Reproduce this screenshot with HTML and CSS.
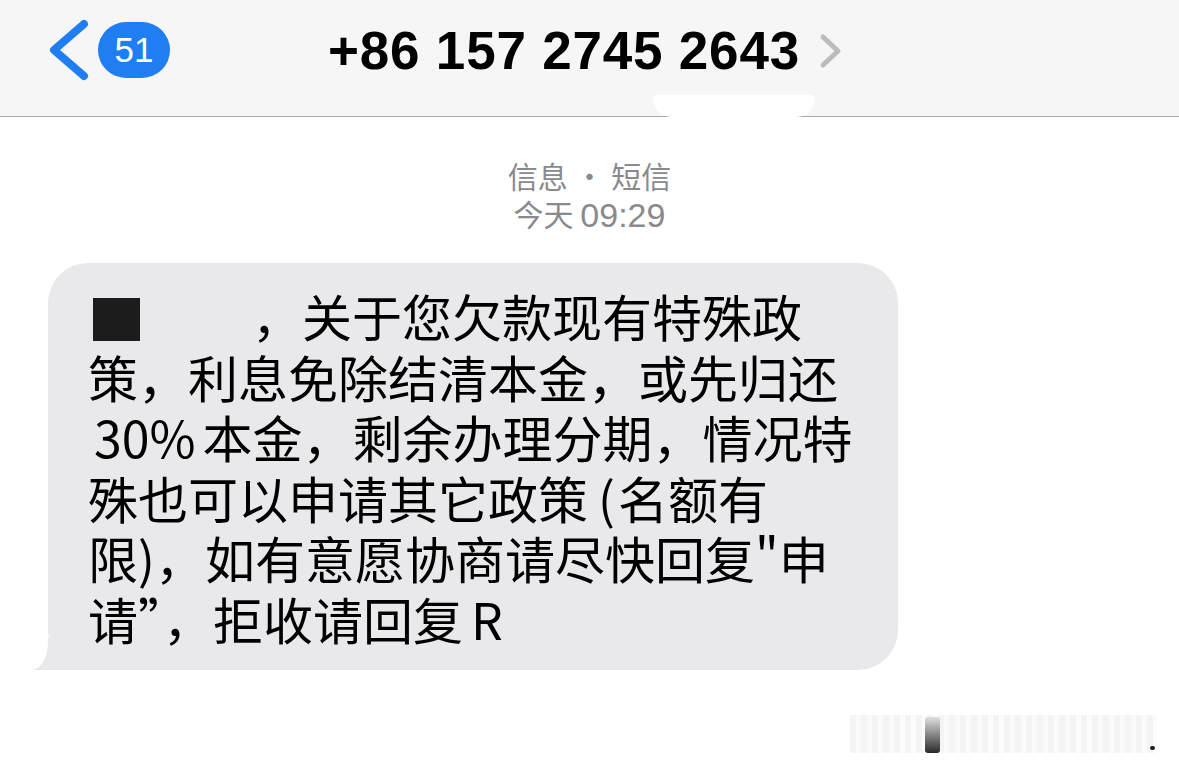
FILE: index.html
```html
<!DOCTYPE html>
<html lang="zh-CN">
<head>
    <meta charset="UTF-8">
    <title>+86 157 2745 2643</title>
    <link rel="stylesheet" href="styles.css">
</head>
<body>
    <div class="nav">
        <div class="nav-left">
            <svg class="back-icon" width="40" height="62" viewBox="0 0 40 62">
                <polyline points="35,5 5,31 35,57" fill="none" stroke="#1f7ef1" stroke-width="8" stroke-linecap="round" stroke-linejoin="round"/>
            </svg>
            <span class="badge">51</span>
        </div>
        <div class="nav-title">
            <span class="number">+86 157 2745 2643</span>
            <svg class="more-icon" width="24" height="36" viewBox="0 0 24 36">
                <polyline points="4,4 19,18 4,32" fill="none" stroke="#bcbcbc" stroke-width="5" stroke-linecap="round" stroke-linejoin="round"/>
            </svg>
        </div>
        <div></div>
        <div class="patch"></div>
    </div>

    <div class="thread">
        <div class="meta">
            <div>信息 · 短信</div>
            <div>今天 <span class="time">09:29</span></div>
        </div>

        <div class="bubble">
            <span class="redact"></span><span class="hidden-name"></span>，关于您欠款现有特殊政<br>
            策，利息免除结清本金，或先归还<br>
            <span class="num">30%</span>本金，剩余办理分期，情况特<br>
            殊也可以申请其它政策<span class="paren">(</span>名额有<br>
            限)，如有意愿协商请尽快回复"申<br>
            请”，拒收请回复<span class="letter">R</span>
        </div>
    </div>

    <div class="footer">
        <div class="watermark">
            <span class="mark-bar"></span>
            <span class="mark-dot"></span>
        </div>
    </div>
</body>
</html>
```

FILE: styles.css
```css
body {
    margin: 0;
    background: #fff;
    font-family: "Noto Sans CJK SC", "Noto Sans", sans-serif;
    color: #000;
}
.nav {
    position: relative;
    display: grid;
    grid-template-columns: 1fr auto 1fr;
    align-items: center;
    height: 100px;
    padding-bottom: 16px;
    background: #f6f6f6;
    border-bottom: 1px solid #a9a9a9;
}
.nav-left {
    display: flex;
    align-items: center;
    gap: 9px;
    padding-left: 49px;
}
.back-icon {
    display: block;
}
.badge {
    display: inline-flex;
    align-items: center;
    justify-content: center;
    width: 72px;
    height: 56px;
    border-radius: 28px;
    background: #1f7ef1;
    color: #fff;
    font-family: "Liberation Sans", Arial, sans-serif;
    font-size: 35px;
}
.nav-title {
    display: flex;
    align-items: center;
    gap: 19px;
    margin-left: -8px;
}
.number {
    font-family: "Liberation Sans", Arial, sans-serif;
    font-weight: bold;
    font-size: 53px;
    letter-spacing: 0.8px;
}
.more-icon {
    display: block;
    margin-top: 2px;
}
.patch {
    position: absolute;
    left: 653px;
    top: 95px;
    width: 162px;
    height: 22px;
    background: #fff;
    border-radius: 4px 4px 20px 20px;
}
.thread {
    padding: 39px 0 0 48px;
}
.meta {
    width: 1083px;
    text-align: center;
    color: #8a8a8e;
    font-size: 30px;
    line-height: 38px;
}
.time {
    font-family: "Liberation Sans", Arial, sans-serif;
    font-size: 34px;
    vertical-align: -1px;
}
.bubble {
    position: relative;
    width: 770px;
    margin-top: 29px;
    padding: 22px 40px 22px 40px;
    background: #e9e9eb;
    border-radius: 40px;
    font-size: 50px;
    line-height: 60.5px;
    white-space: nowrap;
}
.bubble::before {
    content: "";
    position: absolute;
    left: -16px;
    bottom: 0;
    width: 60px;
    height: 32px;
    background: #e9e9eb;
}
.bubble::after {
    content: "";
    position: absolute;
    left: -40px;
    bottom: 0;
    width: 40px;
    height: 32px;
    background: #fff;
    border-bottom-right-radius: 16px 28px;
}
.redact {
    display: inline-block;
    width: 47px;
    height: 43px;
    margin-left: 5px;
    background: #1c1c1c;
    vertical-align: -4px;
}
.hidden-name {
    display: inline-block;
    width: 112px;
}
.num {
    padding: 0 7px 0 6px;
}
.paren {
    padding-left: 10px;
    padding-right: 3px;
}
.letter {
    padding-left: 8px;
}
.footer {
    display: flex;
    justify-content: flex-end;
    padding: 45px 22px 0 0;
}
.watermark {
    position: relative;
    width: 307px;
    height: 38px;
    background: repeating-linear-gradient(90deg, #f4f4f4 0, #f4f4f4 6px, #fbfbfb 6px, #fbfbfb 11px);
}
.mark-bar {
    position: absolute;
    left: 75px;
    top: 2px;
    width: 15px;
    height: 36px;
    border-radius: 3px;
    background: linear-gradient(#e0e0e0, #2a2a2a);
}
.mark-dot {
    position: absolute;
    right: 2px;
    top: 31px;
    width: 5px;
    height: 4px;
    border-radius: 2px;
    background: #222;
}
```
